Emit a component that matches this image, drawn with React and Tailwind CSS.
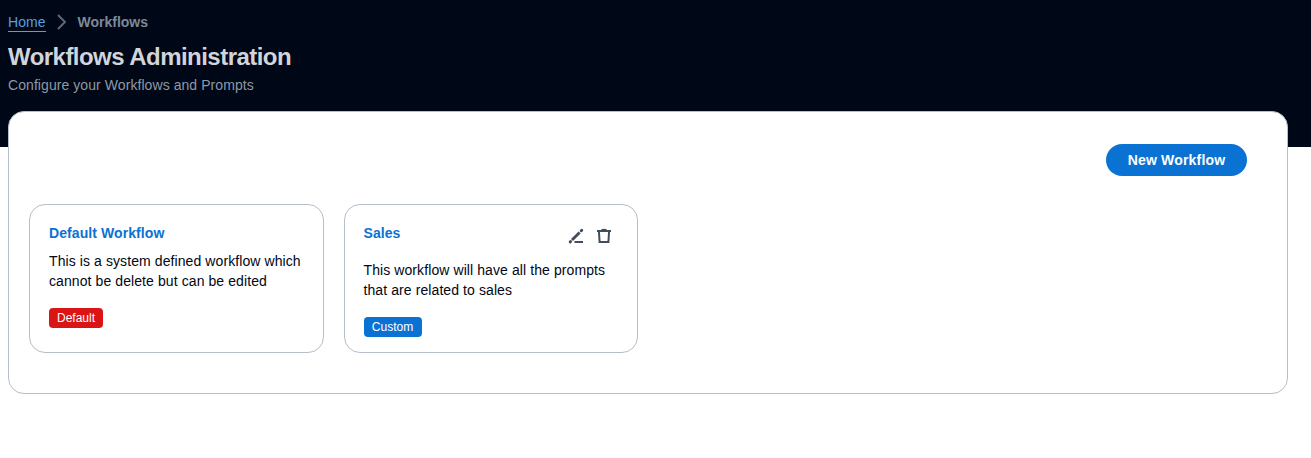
function EditIcon() {
  return (
    <svg width="16" height="16" viewBox="0 0 16 16" fill="none" stroke="#414d5c" strokeWidth="2">
      <path d="M2.2 13.9l.4-.4" strokeWidth="2.9" strokeLinecap="round" />
      <path d="M4 12 11.6 4.4" strokeWidth="2.8" />
      <path d="M13.2 2.8l.6-.6" strokeWidth="2.9" strokeLinecap="round" />
      <path d="M6.5 14H15" />
    </svg>
  );
}

function TrashIcon() {
  return (
    <svg width="16" height="16" viewBox="0 0 16 16" fill="none" stroke="#414d5c" strokeWidth="2">
      <path d="M1 3h14" />
      <path d="M5.5 1.5h5" strokeWidth="1.2" />
      <path d="M2.9 3l.7 11h8.8l.7-11" />
    </svg>
  );
}

function Breadcrumbs() {
  return (
    <nav className="flex h-5 items-center text-sm leading-5">
      <a className="h-5 w-[38px] border-b border-[#539fe5] tracking-[0.08px] text-[#539fe5]">Home</a>
      <svg className="mr-[7.5px] ml-2" width="16" height="16" viewBox="0 0 16 16" fill="none" stroke="#5f6b7a" strokeWidth="1.9">
        <path d="M4 1l7 7-7 7" />
      </svg>
      <span className="font-bold text-[#7d8998]">Workflows</span>
    </nav>
  );
}

function Card({ title, actions, children, badge, badgeClass }) {
  return (
    <article className={`h-[149px] rounded-2xl border border-[#b6bec9] pt-[18px] ${actions ? "px-[18.5px]" : "px-[19px]"}`}>
      <div className="flex justify-between">
        <h2 className="text-sm leading-5 font-bold tracking-[0.08px] text-[#0972d3]">{title}</h2>
        {actions && <div className="mr-[6.5px] flex h-[37px] gap-3 pt-[5px]">{actions}</div>}
      </div>
      <p className={`${actions ? "" : "mt-2"} text-sm leading-5 tracking-[0.09px] whitespace-nowrap text-[#000716]`}>{children}</p>
      <div className="mt-[17px] flex">
        <span className={`flex h-5 items-center justify-center rounded text-xs ${badgeClass}`}>{badge}</span>
      </div>
    </article>
  );
}

export default function App() {
  return (
    <div className="min-h-screen bg-white font-['Liberation_Sans',Arial,sans-serif] text-[#000716]">
      <header className="h-[147px] bg-[#000716] px-2 pt-3">
        <Breadcrumbs />
        <h1 className="mt-[10px] text-2xl leading-[30px] font-bold tracking-[-0.54px] text-[#d1d5db]">Workflows Administration</h1>
        <p className="mt-[3px] text-sm leading-5 tracking-[0.07px] text-[#8d99a8]">Configure your Workflows and Prompts</p>
      </header>
      <main className="relative -mt-9 ml-2 h-[283px] w-[1280px] rounded-2xl border border-[#b6bec9] bg-white px-5 pt-8">
        <div className="flex justify-end pr-5">
          <button className="h-8 w-[141px] rounded-full bg-[#0972d3] text-sm font-bold tracking-[0.17px] text-white">New Workflow</button>
        </div>
        <section className="mt-7 grid grid-cols-[295px_294px] gap-5">
          <Card title="Default Workflow" badge="Default" badgeClass="w-[54px] bg-[#d91515] text-white">
            This is a system defined workflow which
            <br />
            cannot be delete but can be edited
          </Card>
          <Card
            title="Sales"
            badge="Custom"
            badgeClass="w-[58px] bg-[#0972d3] text-white"
            actions={
              <>
                <EditIcon />
                <TrashIcon />
              </>
            }
          >
            This workflow will have all the prompts
            <br />
            that are related to sales
          </Card>
        </section>
      </main>
    </div>
  );
}
